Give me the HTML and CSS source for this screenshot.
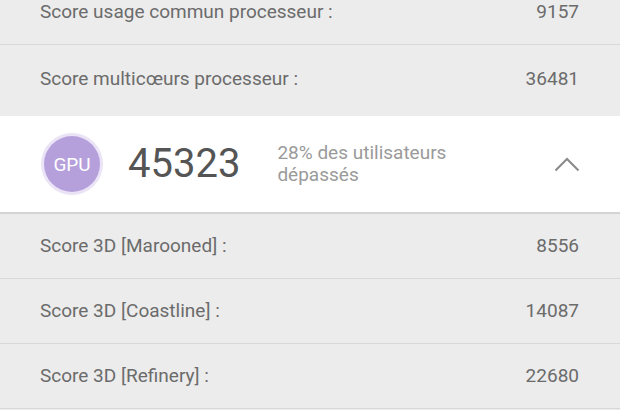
FILE: index.html
```html
<!DOCTYPE html>
<html lang="fr">
<head>
    <meta charset="UTF-8">
    <meta name="viewport" content="width=device-width, initial-scale=1.0">
    <title>Scores</title>
    <link rel="stylesheet" href="styles.css">
</head>
<body>
    <div class="score-list">
        <div class="score-row">
            <span class="label">Score usage commun processeur :</span>
            <span class="value">9157</span>
        </div>
        <div class="score-row last">
            <span class="label">Score multicœurs processeur :</span>
            <span class="value">36481</span>
        </div>

        <div class="score-card">
            <div class="badge">
                <span>GPU</span>
            </div>
            <div class="total">45323</div>
            <div class="rank">28% des utilisateurs<br>dépassés</div>
            <svg class="chevron" width="26" height="16" viewBox="0 0 26 16">
                <path d="M1.5 14.5 L13 3 L24.5 14.5" fill="none" stroke="#8a8a8a" stroke-width="2"/>
            </svg>
        </div>

        <div class="score-row">
            <span class="label">Score 3D [Marooned] :</span>
            <span class="value">8556</span>
        </div>
        <div class="score-row">
            <span class="label">Score 3D [Coastline] :</span>
            <span class="value">14087</span>
        </div>
        <div class="score-row">
            <span class="label">Score 3D [Refinery] :</span>
            <span class="value">22680</span>
        </div>
    </div>
</body>
</html>
```

FILE: styles.css
```css
* {
    box-sizing: border-box;
    margin: 0;
    padding: 0;
}

body {
    font-family: Roboto, "Liberation Sans", Arial, sans-serif;
    background-color: #ececec;
    color: #6b6b6b;
    overflow: hidden;
}

.score-list {
    margin-top: -20px;
}

.score-row {
    display: flex;
    justify-content: space-between;
    align-items: center;
    height: 65px;
    padding: 0 41px 0 40px;
    font-size: 19px;
    line-height: 22px;
    border-bottom: 1px solid #d8d8d8;
}

.score-row.last {
    height: 71px;
    padding-bottom: 3px;
    border-bottom: none;
}

.score-card {
    display: flex;
    align-items: center;
    height: 98px;
    padding: 0 40px 0 41px;
    background-color: #fff;
    border-bottom: 2px solid #d4d4d4;
}

.badge {
    width: 62px;
    height: 62px;
    border-radius: 50%;
    background-color: #ebe4f6;
    display: flex;
    justify-content: center;
    align-items: center;
    flex-shrink: 0;
}

.badge span {
    width: 56px;
    height: 56px;
    border-radius: 50%;
    background-color: #b5a0dc;
    color: #fff;
    font-size: 19px;
    display: flex;
    justify-content: center;
    align-items: center;
}

.total {
    margin-left: 25px;
    font-size: 40px;
    color: #555;
    line-height: 1;
}

.rank {
    margin-left: 37px;
    font-size: 19px;
    line-height: 22px;
    color: #9a9a9a;
    flex: 1;
}
```
